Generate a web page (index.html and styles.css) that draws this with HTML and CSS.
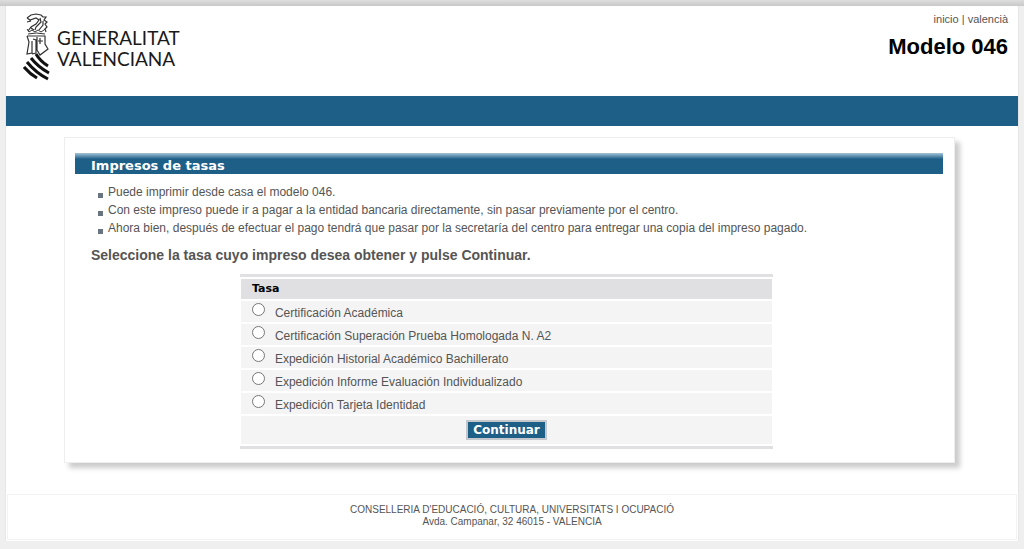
FILE: index.html
```html
<!DOCTYPE html>
<html lang="es">
<head>
  <meta charset="UTF-8">
  <meta name="viewport" content="width=device-width, initial-scale=1.0">
  <title>Modelo 046</title>
  <link rel="stylesheet" href="styles.css">
</head>
<body>

<div class="top-line"></div>

<div class="page">
  <header class="header">
    <div class="logo">
      <svg class="emblem" width="28" height="68" viewBox="0 0 28 68" fill="none" stroke="#333" aria-hidden="true">
        <!-- dragon crest -->
        <path d="M4 5l4-3 5-1 5 1 2 2 3 0-2 3 3 2-2 2 2 3-2 2 1 3M4 5l3 2 6-2 3 2-3 4-5 3-3 4M4 9l4-1M17 5l1 4-5 5-1 3M20 8l0 4-4 5M8 15l3 2" stroke-width="1.2"/>
        <!-- crown -->
        <path d="M4 16l2 3 3-2 3 2 3-2 3 2 3-2 2-2M5 21q8-2 17 0" stroke-width="1"/>
        <!-- helmet and mantle -->
        <path d="M4 23h18v8l3 5-8 6-3-5M4 23l2 6-2 12 5-1 0-12M10 26l3 1 0 13-4 1M14 24v13M17 25v6M15 28h5" stroke-width="1.2"/>
        <!-- shield bars -->
        <path d="M13 41Q17 48 25 53M8 45Q15 54 26 60M4 49Q13 60 25 66M1 54Q7 61 14 65" stroke="#111" stroke-width="3"/>
      </svg>
      <div class="logo-text">GENERALITAT<br>VALENCIANA</div>
    </div>
    <div class="header-right">
      <nav class="links"><a href="#">inicio</a> | <a href="#">valencià</a></nav>
      <h1>Modelo 046</h1>
    </div>
  </header>

  <div class="menu-bar"></div>

  <main class="panel">
    <h2>Impresos de tasas</h2>
    <ul class="notes">
      <li>Puede imprimir desde casa el modelo 046.</li>
      <li>Con este impreso puede ir a pagar a la entidad bancaria directamente, sin pasar previamente por el centro.</li>
      <li>Ahora bien, después de efectuar el pago tendrá que pasar por la secretaría del centro para entregar una copia del impreso pagado.</li>
    </ul>
    <h3>Seleccione la tasa cuyo impreso desea obtener y pulse Continuar.</h3>

    <form class="tasas-form">
      <table class="tasas">
        <thead>
          <tr><th colspan="2" scope="col">Tasa</th></tr>
        </thead>
        <tbody>
          <tr>
            <td class="pick"><input type="radio" name="tasa" id="tasa1"></td>
            <td><label for="tasa1">Certificación Académica</label></td>
          </tr>
          <tr>
            <td class="pick"><input type="radio" name="tasa" id="tasa2"></td>
            <td><label for="tasa2">Certificación Superación Prueba Homologada N. A2</label></td>
          </tr>
          <tr>
            <td class="pick"><input type="radio" name="tasa" id="tasa3"></td>
            <td><label for="tasa3">Expedición Historial Académico Bachillerato</label></td>
          </tr>
          <tr>
            <td class="pick"><input type="radio" name="tasa" id="tasa4"></td>
            <td><label for="tasa4">Expedición Informe Evaluación Individualizado</label></td>
          </tr>
          <tr>
            <td class="pick"><input type="radio" name="tasa" id="tasa5"></td>
            <td><label for="tasa5">Expedición Tarjeta Identidad</label></td>
          </tr>
        </tbody>
        <tfoot>
          <tr><td colspan="2"><button type="button">Continuar</button></td></tr>
        </tfoot>
      </table>
    </form>
  </main>

  <footer class="footer">
    CONSELLERIA D'EDUCACIÓ, CULTURA, UNIVERSITATS I OCUPACIÓ<br>
    Avda. Campanar, 32 46015 - VALENCIA
  </footer>
</div>

</body>
</html>
```

FILE: styles.css
```css
body {
  margin: 0;
  background: #efefef;
  color: #555;
  font-family: Arial, "Liberation Sans", sans-serif;
  font-size: 12px;
}

.top-line {
  height: 6px;
  background: linear-gradient(#dedede, #c8c8c8);
}

.page {
  margin: 0 5px;
  padding-bottom: 1px;
  background: #fff;
  border: solid #e6e6e6;
  border-width: 0 1px;
}

.header {
  display: flex;
  justify-content: space-between;
  height: 90px;
}

.logo {
  display: flex;
  gap: 6px;
  padding: 7px 0 0 17px;
}

.logo-text {
  padding-top: 14px;
  color: #1a1a1a;
  font-family: Lato, sans-serif;
  font-size: 19px;
  line-height: 21px;
}

.header-right {
  padding: 5px 10px 0 0;
  text-align: right;
}

.links {
  font-size: 11px;
  line-height: 16px;
}

.links a {
  color: #555;
  text-decoration: none;
}

h1 {
  margin: 7px 0 0;
  color: #000;
  font-size: 22px;
  line-height: 26px;
}

.menu-bar {
  height: 30px;
  background: #1e5f88;
}

.panel {
  margin: 11px 63px 31px 58px;
  padding: 15px 11px 13px 10px;
  border: 1px solid #eee;
  box-shadow: 5px 5px 5px #ccc;
}

h2 {
  margin: 0;
  padding: 5px 16px 0;
  background: linear-gradient(#a5c5d9, #1e5f88 6px);
  color: #fff;
  font-family: Verdana, "DejaVu Sans", sans-serif;
  font-size: 13px;
  line-height: 16px;
}

.notes {
  margin: 9px 0 0;
  padding: 0 0 0 33px;
  list-style: none;
  line-height: 18px;
}

.notes li {
  display: flex;
  align-items: center;
}

.notes li::before {
  content: "";
  width: 5px;
  height: 5px;
  margin: 6px 5px 0 -10px;
  background: #687480;
}

h3 {
  margin: 9px 16px;
  font-size: 14px;
  line-height: 18px;
}

.tasas-form {
  width: 61.2%;
  margin: 10px auto 0 19%;
  padding: 0 1px;
  border: solid #e0e0e2;
  border-width: 3px 0;
}

.tasas {
  width: 100%;
  border-spacing: 0 2px;
}

.tasas th {
  height: 18px;
  padding: 0 11px;
  background: #e0e0e2;
  color: #000;
  text-align: left;
  font-family: Verdana, "DejaVu Sans", sans-serif;
  font-size: 11px;
  line-height: 20px;
}

.tasas tr {
  background: #f4f4f4;
}

.tasas td {
  height: 21px;
  padding: 0;
}

.tasas label {
  display: block;
  padding-top: 2px;
}

.tasas .pick {
  width: 34px;
}

.pick input {
  display: block;
  width: 13px;
  height: 13px;
  margin: 0 0 4px 11px;
}

.tasas tfoot td {
  height: 28px;
  text-align: center;
}

button {
  height: 20px;
  padding: 0 5px;
  border: 2px solid #c4c8cc;
  background: #1e5f88;
  color: #fff;
  font-family: Verdana, "DejaVu Sans", sans-serif;
  font-size: 12px;
  font-weight: bold;
  line-height: 16px;
}

.footer {
  margin: 0 1px;
  padding: 9px 0 11px;
  border: 1px solid #f2f2f2;
  text-align: center;
  font-size: 10px;
  line-height: 12px;
}
```
